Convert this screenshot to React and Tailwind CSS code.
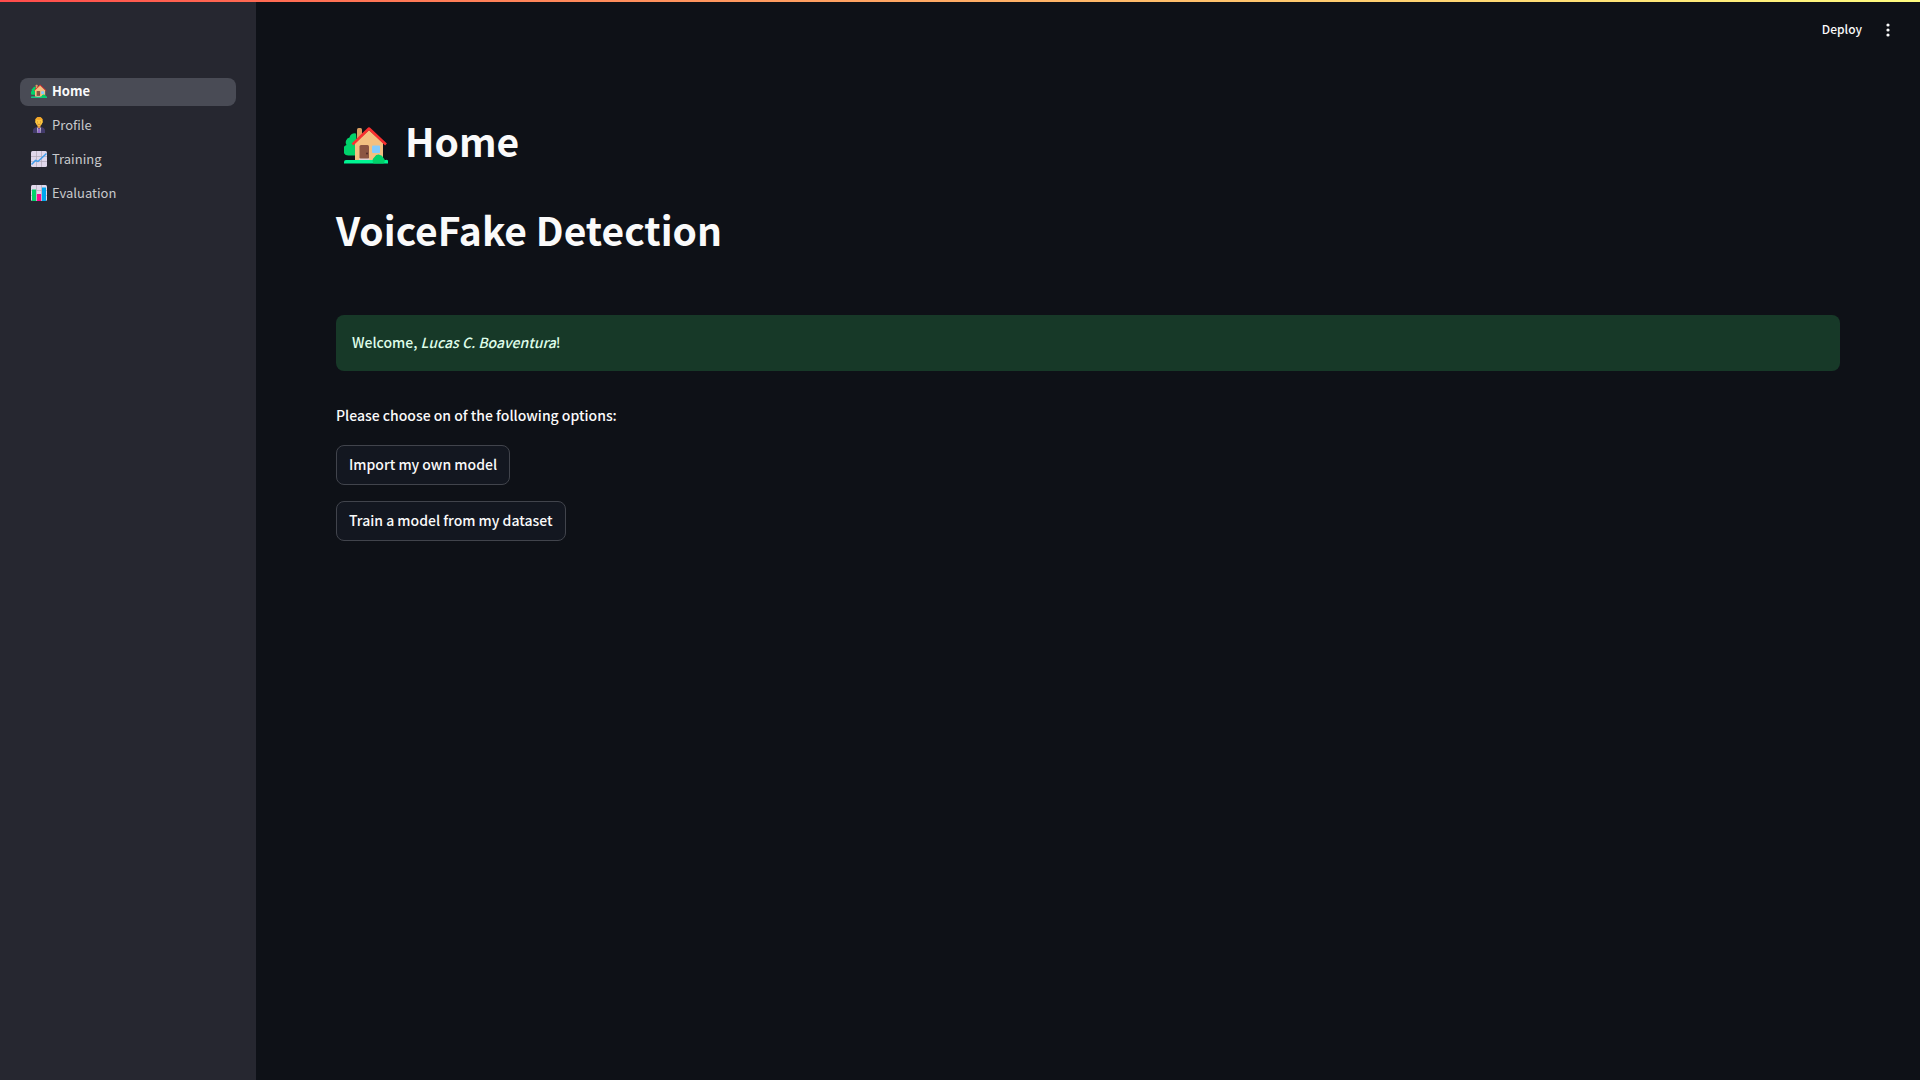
function HouseIcon({ className }) {
  return (
    <svg viewBox="0 0 44 38" className={className} aria-hidden="true">
      <path d="M12 7.500a5 5 0 0 0-6.500 4 5 5 0 0 0-3 7.500 5.500 5.500 0 0 0 3 10.500H14z" fill="#00d26a" />
      <path d="M2 34h40a1.500 1.500 0 0 1 2 2v1.500H0V36a2 2 0 0 1 2-2z" fill="#00f593" />
      <path d="M13 3.500a1.500 1.500 0 0 1 1.500-1.500h2A1.500 1.500 0 0 1 18 3.500V12h-5z" fill="#d99f63" />
      <path d="M11 17 25 4l14 13v17H11z" fill="#f3c081" />
      <rect x="15.500" y="19" width="9.500" height="14" rx="1.500" fill="#8c5543" />
      <rect x="15" y="32.500" width="10.500" height="1.500" fill="#e0d0d6" />
      <circle cx="23" cy="27.500" r="1" fill="#4e2b29" />
      <rect x="28" y="19.500" width="8" height="7.500" rx="1" fill="#83cbff" />
      <path d="M8.500 18.500 25 2.500l17 16" fill="none" stroke="#f92f2f" strokeWidth="2.600" strokeLinejoin="round" />
      <path d="M29.500 37.500a5 5 0 0 1 1-6.500 5 5 0 0 1 9 1 3.500 3.500 0 0 1 0 5.500z" fill="#00d26a" />
    </svg>
  );
}

function PersonIcon({ className }) {
  return (
    <svg viewBox="0 0 32 32" className={className} aria-hidden="true">
      <path d="M13 16h6v6h-6z" fill="#e19747" />
      <path d="M4 32v-5c0-4 3-6 8-7l4 3 4-3c5 1 8 3 8 7v5z" fill="#433b6b" />
      <path d="m12 20 4 5 4-5-1 12h-6z" fill="#d3c9e0" />
      <path d="m14.500 23h3l1 9h-5z" fill="#8d65c5" />
      <path d="M9 8c0-5 3-8 7-8s7 3 7 8c1 0 1 4-.5 4-1 4-3.500 6-6.500 6s-5.500-2-6.500-6C8 12 8 8 9 8z" fill="#ffc83d" />
      <path d="M8.500 9c-1-6 3-9 7.500-9s8.500 3 7.500 9l-2-4c-3 1-8 1-11 0z" fill="#f4a62a" />
      <path d="M12 10h2M18 10h2M13 14q3 2 6 0" fill="none" stroke="#b5733a" strokeWidth="1.500" />
    </svg>
  );
}

function TrendIcon({ className }) {
  return (
    <svg viewBox="0 0 32 32" className={className} aria-hidden="true">
      <rect width="32" height="32" rx="3" fill="#e1d8ec" />
      <path d="M0 11h32M0 21h32M11 0v32M21 0v32" stroke="#b4acbc" strokeWidth="1.500" />
      <path d="m1 27 8-8 5 2L31 5" fill="none" stroke="#3f9deb" strokeWidth="3" />
    </svg>
  );
}

function BarsIcon({ className }) {
  return (
    <svg viewBox="0 0 32 32" className={className} aria-hidden="true">
      <rect width="32" height="32" rx="3" fill="#e1d8ec" />
      <path d="M0 11h32M0 21h32M11 0v32M21 0v32" stroke="#b4acbc" strokeWidth="1.500" />
      <path d="M2 9h8v23H2z" fill="#00d26a" />
      <path d="M12 18h8v14h-8z" fill="#f70a8d" />
      <path d="M22 5h8v27h-8z" fill="#00a6ed" />
    </svg>
  );
}

const pages = [
  { name: "Home", Icon: HouseIcon, active: true },
  { name: "Profile", Icon: PersonIcon },
  { name: "Training", Icon: TrendIcon },
  { name: "Evaluation", Icon: BarsIcon },
];

function Sidebar() {
  return (
    <aside className="w-64 shrink-0 bg-[#262730] px-5 pt-[78px]">
      <nav>
        <ul className="flex flex-col gap-1.5">
          {pages.map(({ name, Icon, active }) => (
            <li key={name}>
              <a
                href="#"
                aria-current={active ? "page" : undefined}
                className={
                  active
                    ? "flex h-7 items-center gap-[5px] rounded-lg bg-[#494b55] px-[11px] pb-0.5 text-[13px] font-bold text-[#fafafa]"
                    : "flex h-7 items-center gap-[5px] rounded-lg px-[11px] pb-0.5 text-[13px] text-[#c8c9cc]"
                }
              >
                <Icon className="size-4" />
                <span>{name}</span>
              </a>
            </li>
          ))}
        </ul>
      </nav>
    </aside>
  );
}

function OptionButton({ children }) {
  return (
    <button
      type="button"
      className="h-10 rounded-lg border border-[#41444c] bg-[#131720] px-3 pb-0.5 font-medium"
    >
      {children}
    </button>
  );
}

export default function App() {
  return (
    <div className={'relative flex min-h-screen bg-[#0e1117] font-["Noto_Sans_CJK_SC","Liberation_Sans",sans-serif] text-[14px] leading-6 text-[#fafafa]'}>
      <div className="absolute inset-x-0 top-0 h-0.5 bg-linear-to-r from-[#ff4b4b] to-[#fffd80]" />
      <Sidebar />
      <div className="flex min-w-0 flex-1 flex-col">
        <header className="flex h-15 items-center justify-end gap-[18px] pr-6">
          <button type="button" className="pb-0.5 text-[12px] font-medium">Deploy</button>
          <button type="button" aria-label="Main menu" className="flex h-6 w-4 items-center justify-center">
            <svg viewBox="0 0 16 16" className="size-4" fill="#fafafa" aria-hidden="true">
              <circle cx="8" cy="3" r="1.600" />
              <circle cx="8" cy="8" r="1.600" />
              <circle cx="8" cy="13" r="1.600" />
            </svg>
          </button>
        </header>
        <main className="px-20 pt-[34px]">
          <h1 className="flex items-center gap-[17px] pt-5 pb-4 pl-2 text-[39px] leading-[53px] font-bold">
            <HouseIcon className="mb-[3px] h-[38px] w-11 self-end" />
            <span>Home</span>
          </h1>
          <h1 className="pt-5 pb-4 text-[39px] leading-[53px] font-bold">VoiceFake Detection</h1>
          <div role="alert" className="mt-[43px] rounded-lg bg-[#173928] px-4 pt-[15px] pb-[17px] font-medium text-[#dffde9]">
            Welcome, <em>Lucas C. Boaventura</em>!
          </div>
          <p className="mt-8 font-medium">Please choose on of the following options:</p>
          <div className="mt-[18px] flex flex-col items-start gap-4">
            <OptionButton>Import my own model</OptionButton>
            <OptionButton>Train a model from my dataset</OptionButton>
          </div>
        </main>
      </div>
    </div>
  );
}
